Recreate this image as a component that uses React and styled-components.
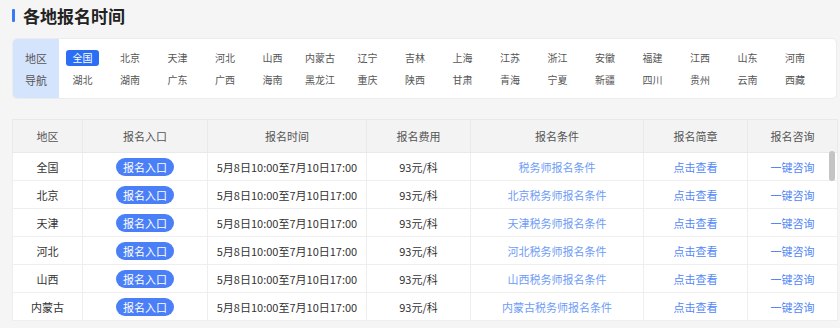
import styled, { createGlobalStyle } from "styled-components";

const GlobalStyle = createGlobalStyle`
  body {
    margin: 0;
    background: #f5f5f6;
    font-family: "Noto Sans CJK SC", "Liberation Sans", sans-serif;
  }
`;

const regions = [
  ["全国", "北京", "天津", "河北", "山西", "内蒙古", "辽宁", "吉林", "上海", "江苏", "浙江", "安徽", "福建", "江西", "山东", "河南"],
  ["湖北", "湖南", "广东", "广西", "海南", "黑龙江", "重庆", "陕西", "甘肃", "青海", "宁夏", "新疆", "四川", "贵州", "云南", "西藏"],
];

const rows = ["全国", "北京", "天津", "河北", "山西", "内蒙古"];

const App = () => {
  return (
    <Page>
      <GlobalStyle />
      <Title>各地报名时间</Title>
      <Nav>
        <NavLabel>
          <span>地区</span>
          <span>导航</span>
        </NavLabel>
        <NavGrid>
          {regions.flat().map((name, i) => (
            <NavItem key={name} active={i === 0}>{name}</NavItem>
          ))}
        </NavGrid>
      </Nav>
      <TableWrap>
        <Table>
          <colgroup>
            <col style={{ width: 70 }} />
            <col style={{ width: 125 }} />
            <col style={{ width: 159 }} />
            <col style={{ width: 104 }} />
            <col style={{ width: 173 }} />
            <col style={{ width: 104 }} />
            <col style={{ width: 90 }} />
          </colgroup>
          <thead>
            <tr>
              <Th>地区</Th>
              <Th>报名入口</Th>
              <Th>报名时间</Th>
              <Th>报名费用</Th>
              <Th>报名条件</Th>
              <Th>报名简章</Th>
              <Th>报名咨询</Th>
            </tr>
          </thead>
          <tbody>
            {rows.map((name) => (
              <tr key={name}>
                <Td>{name}</Td>
                <Td><EntryButton>报名入口</EntryButton></Td>
                <Td>5月8日10:00至7月10日17:00</Td>
                <Td>93元/科</Td>
                <Td><Link light>{name === "全国" ? "" : name}税务师报名条件</Link></Td>
                <Td><Link>点击查看</Link></Td>
                <Td><Link>一键咨询</Link></Td>
              </tr>
            ))}
          </tbody>
        </Table>
        <ScrollThumb />
      </TableWrap>
    </Page>
  );
};

export default App;

const Page = styled.div`
  width: 825px;
  padding: 0 0 0 12px;
`;

const Title = styled.h2`
  display: flex;
  align-items: center;
  gap: 8px;
  height: 30px;
  margin: 0 0 8px;
  font-size: 17px;
  font-weight: 700;
  color: #222;

  &::before {
    content: "";
    width: 3px;
    height: 13px;
    background: #3b78f5;
    border-radius: 1px;
  }
`;

const Nav = styled.div`
  display: flex;
  height: 61px;
  background: #fff;
  border: 1px solid #ececec;
  border-radius: 5px;
  box-sizing: border-box;
  overflow: hidden;
`;

const NavLabel = styled.div`
  width: 46px;
  flex-shrink: 0;
  display: flex;
  flex-direction: column;
  align-items: center;
  padding-top: 8px;
  background: #d5e4fd;
  font-size: 11px;
  line-height: 22px;
  color: #555;
`;

const NavGrid = styled.div`
  display: grid;
  grid-template-columns: repeat(16, 33px);
  grid-auto-rows: 22px;
  column-gap: 14.5px;
  padding: 8px 0 0 7px;
`;

const NavItem = styled.div`
  align-self: center;
  height: 16px;
  line-height: 16px;
  text-align: center;
  font-size: 10px;
  border-radius: 3px;
  white-space: nowrap;
  color: ${(p) => (p.active ? "#fff" : "#555")};
  background: ${(p) => (p.active ? "#2b6ef5" : "transparent")};
`;

const TableWrap = styled.div`
  position: relative;
  margin-top: 20px;
`;

const Table = styled.table`
  width: 825px;
  table-layout: fixed;
  border-collapse: collapse;
  background: #fff;
  font-size: 11px;
  text-align: center;
`;

const Th = styled.th`
  height: 30px;
  font-weight: 400;
  color: #555;
  background: #f3f3f3;
  border: 1px solid #e9e9e9;
`;

const Td = styled.td`
  height: 27px;
  padding: 0;
  color: #333;
  border: 1px solid #eeeeee;
  white-space: nowrap;
`;

const EntryButton = styled.span`
  display: inline-block;
  width: 58px;
  height: 18px;
  line-height: 18px;
  border-radius: 9px;
  background: #4a7ff7;
  color: #fff;
`;

const Link = styled.span`
  color: ${(p) => (p.light ? "#6e9cf6" : "#5287f6")};
`;

const ScrollThumb = styled.div`
  position: absolute;
  top: 32px;
  right: 2px;
  width: 6px;
  height: 30px;
  border-radius: 3px;
  background: #c4c4c4;
`;
